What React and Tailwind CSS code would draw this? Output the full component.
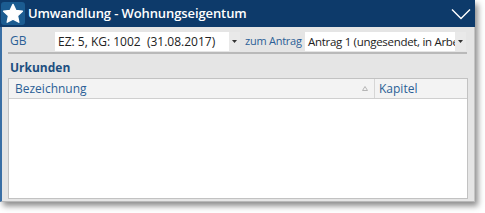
const SelectBox = ({ text, className, textClass = 'text-[12px]' }) => (
  <div className={`flex items-center h-[19px] bg-white ${className}`}>
    <span className={`flex-1 overflow-hidden whitespace-pre pl-[3px] leading-[19px] text-[#222] ${textClass}`}>
      {text}
    </span>
    <span className="w-[11px] h-full bg-[#e9e9e9] flex items-center justify-center">
      <svg width="5" height="3" viewBox="0 0 5 3">
        <path d="M0 0h5L2.5 3z" fill="#333" />
      </svg>
    </span>
  </div>
);

const App = () => {
  return (
    <div className="w-[485px] h-[213px] bg-white" style={{ fontFamily: '"Open Sans", sans-serif' }}>
      <div className="w-[475px] h-[202px] flex flex-col shadow-[3px_4px_6px_rgba(0,0,0,0.45)]">
        <div className="h-[27px] bg-[#0d3a6a] flex items-center">
          <div className="ml-[1px] w-[24px] h-[23px] rounded-[3px] bg-[#1b5c91] flex items-center justify-center">
            <svg width="22" height="21" viewBox="0 0 24 23">
              <path
                d="M12 1.5l3.1 6.6 7.2.9-5.3 5 1.4 7.1L12 17.6l-6.4 3.5 1.4-7.1-5.3-5 7.2-.9z"
                fill="#fff"
                stroke="#fff"
                strokeWidth="1.5"
                strokeLinejoin="round"
              />
            </svg>
          </div>
          <span className="ml-[3px] text-[13px] font-semibold text-white tracking-[-0.1px]">Umwandlung - Wohnungseigentum</span>
          <svg className="ml-auto mr-[4px]" width="20" height="12" viewBox="0 0 20 12">
            <path d="M1 1.5l9 9 9-9" fill="none" stroke="#fff" strokeWidth="1.4" />
          </svg>
        </div>
        <div className="flex-1 flex flex-col bg-[#e5e5e5] border-l-2 border-l-[#3a6fa5] border-r border-r-[#c4c4c4] border-b border-b-[#b8b8b8] pl-[6px] pr-[6px]">
          <div className="flex items-center h-[24px] pt-[4px]">
            <span className="ml-[2px] w-[45px] text-[12px] text-[#2b5f96]">GB</span>
            <SelectBox text="EZ: 5, KG: 1002  (31.08.2017)" className="w-[185px]" />
            <span className="ml-[5px] w-[60px] whitespace-nowrap text-[11px] tracking-[-0.25px] text-[#2b5f96]">
              zum Antrag
            </span>
            <SelectBox
              text="Antrag 1 (ungesendet, in Arbeit)"
              className="w-[161px]"
              textClass="text-[11.5px] tracking-[-0.3px]"
            />
          </div>
          <div className="h-[2px] mt-[1px] mr-[1px] bg-[#b9b9b9]" />
          <div className="pl-[2px] pt-[6px] h-[24px] text-[12px] font-bold text-[#1d4f80] leading-[16px]">Urkunden</div>
          <div className="flex-1 mb-[2px] bg-white border border-[#c2c2c2] flex flex-col">
            <div className="h-[20px] flex bg-[#f3f3f3] border-b border-[#cfcfcf] text-[12px] text-[#2b5f96]">
              <div className="w-[366px] flex items-center pl-[6px] pr-[6px] border-r border-[#d6d6d6]">
                <span>Bezeichnung</span>
                <svg className="ml-auto" width="6" height="5" viewBox="0 0 6 5">
                  <path d="M3 0.5L5.5 4.5H0.5z" fill="none" stroke="#b5b5b5" strokeWidth="1" />
                </svg>
              </div>
              <div className="flex-1 flex items-center pl-[4px]">Kapitel</div>
            </div>
          </div>
        </div>
      </div>
    </div>
  );
};

export default App;
